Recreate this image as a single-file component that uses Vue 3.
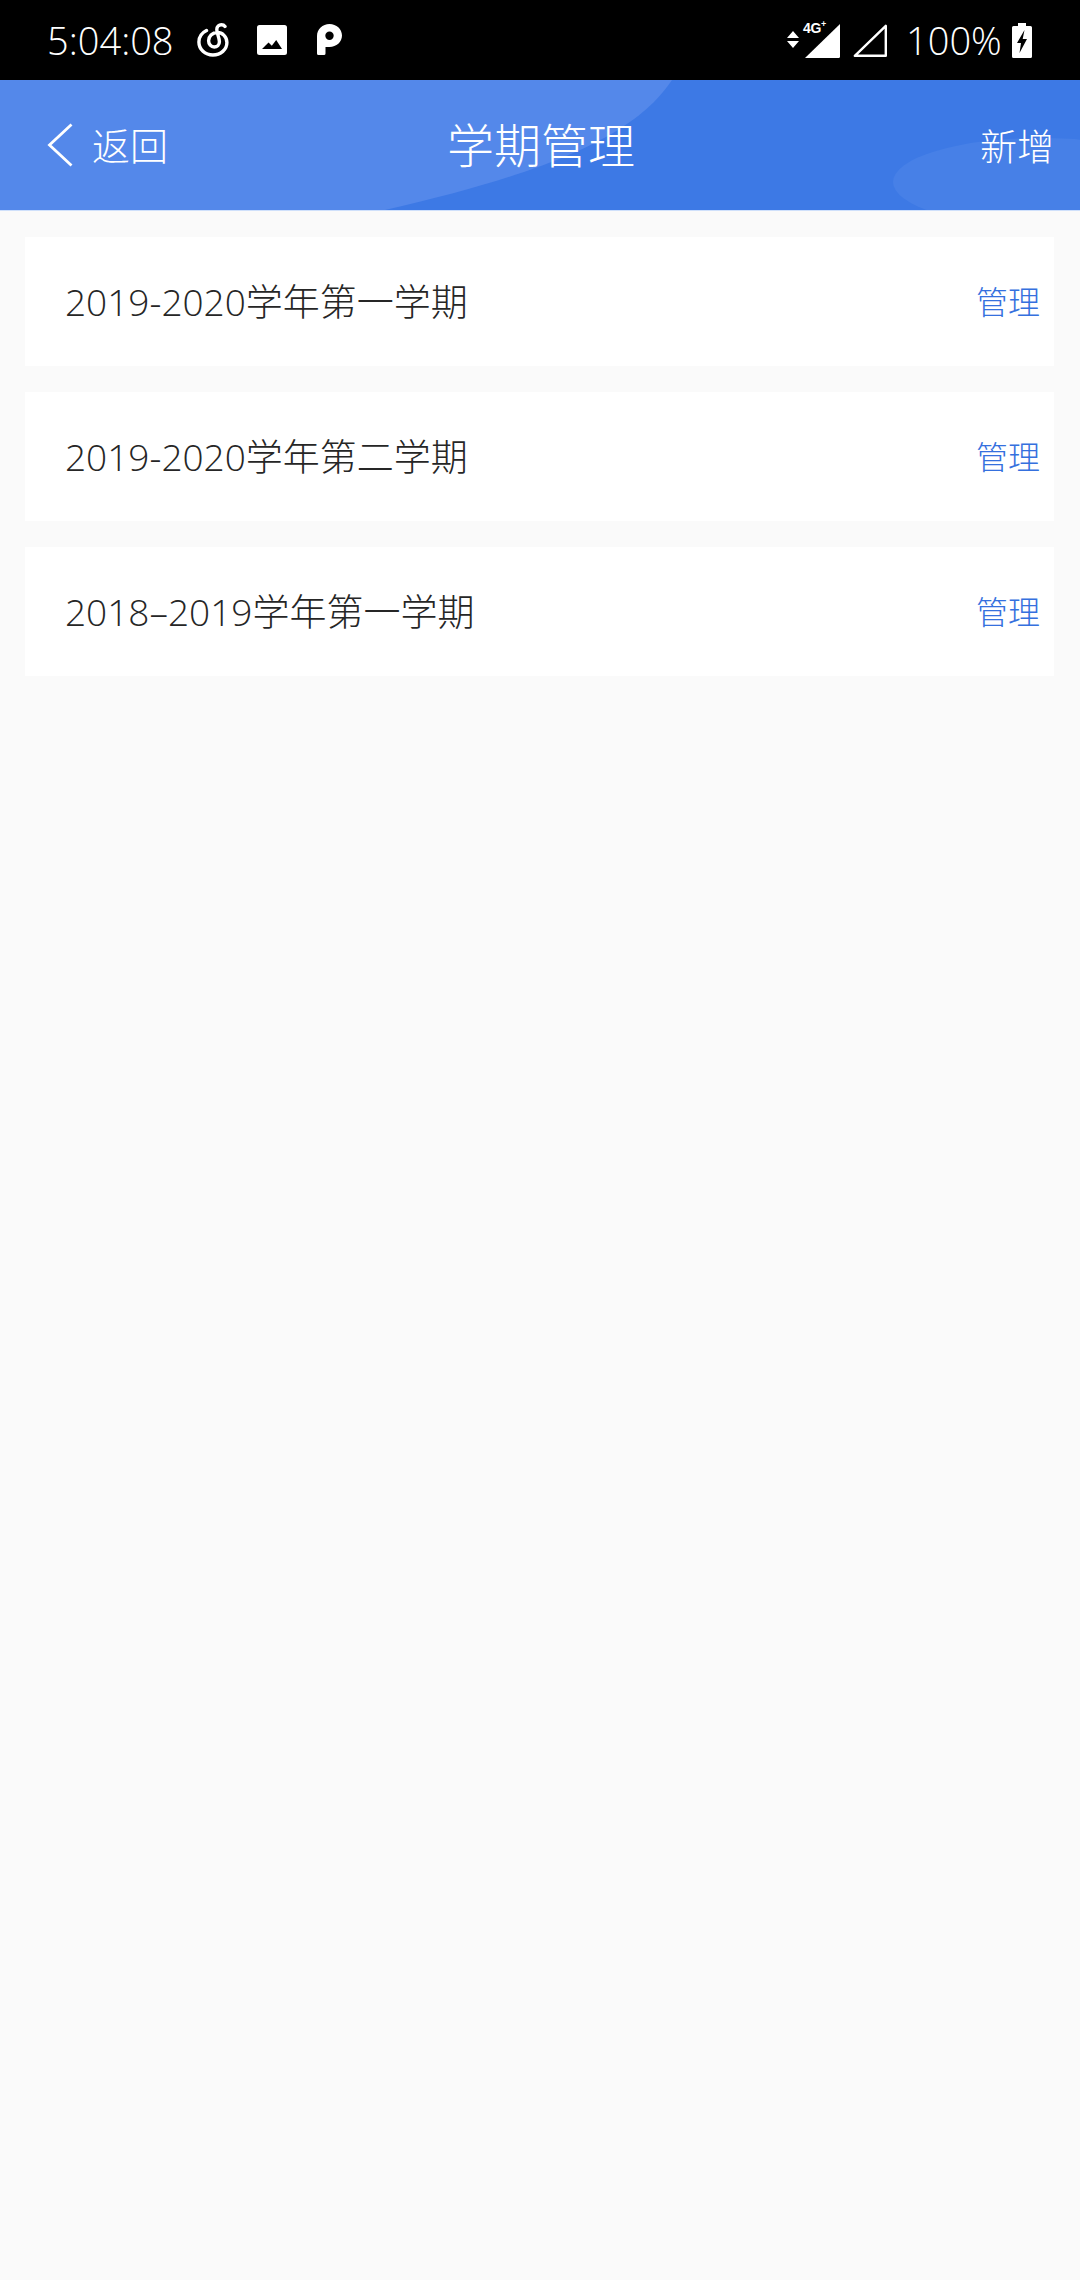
<script setup>
const semestres = [
  { id: 1, nombre: '2019-2020学年第一学期' },
  { id: 2, nombre: '2019-2020学年第二学期' },
  { id: 3, nombre: '2018–2019学年第一学期' }
]
</script>

<template>
  <div class="screen">
    <!-- Barra de estado -->
    <div class="status-bar">
      <div class="status-left">
        <span class="time">5:04:08</span>
        <svg class="ic-netease" viewBox="0 0 32 34" fill="none" stroke="#fff" stroke-width="3.4" stroke-linecap="round">
          <path d="M9.5 7.5C4.5 10 1.9 14.5 1.9 19c0 7.5 6.2 13 14 13s14-5.500 14-12.500c0-5.800-4.500-10-9.500-10-5.200 0-8.800 3.800-8.800 8.200 0 3.500 2.500 6.300 5.600 6.300 3 0 5.200-2.300 5.200-5.200 0-4.500-2.600-8-2.600-12.300 0-3 2.200-4.800 4.600-4.800 1.500 0 2.800.6 3.600 1.700" />
        </svg>
        <svg class="ic-image" viewBox="0 0 30 30">
          <path fill="#fff" fill-rule="evenodd" d="M2.500 0h25A2.500 2.500 0 0 1 30 2.500v25a2.500 2.500 0 0 1-2.500 2.500h-25A2.500 2.500 0 0 1 0 27.500v-25A2.500 2.500 0 0 1 2.500 0zM5 24h20l-5.800-9-4.400 5.800-3.300-3.300z" />
        </svg>
        <svg class="ic-p" viewBox="0 0 25 31">
          <path fill="#fff" fill-rule="evenodd" d="M12.500 0C19.400 0 25 5 25 11.500S19.400 23 12.500 23H8.500v6.500a1.500 1.500 0 0 1-1.500 1.500H1.500A1.500 1.500 0 0 1 0 29.500V12C0 5 5.600 0 12.500 0zm0 7.500a4.200 4.200 0 1 0 0 8.400 4.200 4.200 0 0 0 0-8.400z" />
        </svg>
      </div>
      <div class="status-right">
        <svg class="ic-arrows" viewBox="0 0 12 17">
          <path fill="#fff" d="M6 0l6 7H0zM0 10h12l-6 7z" />
        </svg>
        <div class="signal">
          <svg class="ic-signal" viewBox="0 0 35 34">
            <path fill="#fff" d="M35 0v32.500a1.500 1.500 0 0 1-1.500 1.500H0z" />
          </svg>
          <span class="net">4G<sup>+</sup></span>
        </div>
        <svg class="ic-signal2" viewBox="0 0 35 34">
          <path fill="none" stroke="#fff" stroke-width="2.400" stroke-linejoin="round" d="M33.800 2.800V32.800H2.800z" />
        </svg>
        <span class="battery-text">100%</span>
        <svg class="ic-battery" viewBox="0 0 20 35">
          <path fill="#fff" fill-rule="evenodd" d="M6 0h8v3h4.500A1.500 1.500 0 0 1 20 4.500v29a1.500 1.500 0 0 1-1.500 1.500h-17A1.500 1.500 0 0 1 0 33.500v-29A1.500 1.500 0 0 1 1.500 3H6zM12.500 7L5 20h4l-1.500 10L15 16h-4.300z" />
        </svg>
      </div>
    </div>

    <!-- Cabecera -->
    <header class="header">
      <svg class="header-bg" viewBox="0 0 1080 130" preserveAspectRatio="none">
        <path fill="#5488ea" d="M0 0H672C640 48 570 88 385 130H0z" />
        <ellipse cx="1040" cy="102" rx="147" ry="44" fill="#4780e7" />
      </svg>
      <div class="back">
        <svg class="ic-back" viewBox="0 0 26 44" fill="none" stroke="#fff" stroke-width="2.800">
          <path d="M24.500 1.500L2.500 22l22 20.500" />
        </svg>
        <span class="back-text">返回</span>
      </div>
      <h1 class="title">学期管理</h1>
      <span class="add">新增</span>
    </header>

    <!-- Lista de semestres -->
    <main class="list">
      <div v-for="s in semestres" :key="s.id" class="card">
        <span class="name">{{ s.nombre }}</span>
        <span class="manage">管理</span>
      </div>
    </main>
  </div>
</template>

<style scoped>
.screen {
  width: 1080px;
  height: 2280px;
  background: #fafafa;
  display: flex;
  flex-direction: column;
  overflow: hidden;
  font-family: "Open Sans", "Noto Sans CJK SC", sans-serif;
}

/* Barra de estado */
.status-bar {
  height: 80px;
  background: #000;
  color: #fff;
  display: flex;
  align-items: center;
  justify-content: space-between;
  padding: 0 48px 0 47px;
  box-sizing: border-box;
}

.status-left,
.status-right {
  display: flex;
  align-items: center;
}

.time {
  font-family: "Open Sans", sans-serif;
  font-weight: 300;
  font-size: 38px;
  line-height: 78px;
  width: 150px;
}

.ic-netease { width: 32px; height: 34px; }
.ic-image { width: 30px; height: 30px; margin-left: 28px; margin-top: -1px; }
.ic-p { width: 25px; height: 31px; margin-left: 30px; margin-top: -1px; }

.ic-arrows { width: 12px; height: 17px; margin-right: 6px; margin-top: -1px; }

.signal {
  position: relative;
  width: 35px;
  height: 34px;
  margin-top: 2px;
}

.ic-signal { display: block; width: 35px; height: 34px; }

.net {
  position: absolute;
  left: -2px;
  top: -3px;
  font-family: "Liberation Sans", sans-serif;
  font-weight: 700;
  font-size: 14px;
  line-height: 15px;
  letter-spacing: -0.3px;
  white-space: nowrap;
  background: #000;
  padding-right: 1px;
}

.net sup {
  font-size: 9px;
  line-height: 0;
}

.ic-signal2 { width: 35px; height: 34px; margin-left: 12px; }

.battery-text {
  font-family: "Open Sans", sans-serif;
  font-weight: 300;
  font-size: 38px;
  line-height: 78px;
  margin-left: 19px;
  width: 106px;
}

.ic-battery { width: 20px; height: 35px; }

/* Cabecera */
.header {
  position: relative;
  height: 131px;
  box-sizing: border-box;
  border-bottom: 1px solid #cfe0fb;
  background: #3d79e5;
  color: #fff;
  display: grid;
  grid-template-columns: 1fr auto 1fr;
  align-items: center;
  padding: 0 26px 0 28px;
}

.header-bg {
  position: absolute;
  left: 0;
  top: 0;
  width: 1080px;
  height: 130px;
}

.back {
  position: relative;
  display: flex;
  align-items: center;
  margin-left: 19px;
  font-size: 38px;
  font-weight: 300;
}

.back-text {
  margin-top: -3px;
}

.ic-back {
  width: 26px;
  height: 44px;
  margin-right: 19px;
}

.title {
  position: relative;
  margin: 0;
  font-size: 47px;
  font-weight: 300;
  line-height: 1.2;
}

.add {
  position: relative;
  justify-self: end;
  font-size: 37px;
  font-weight: 300;
}

/* Lista */
.list {
  display: flex;
  flex-direction: column;
  gap: 26px;
  padding: 26px 26px 0 25px;
}

.card {
  height: 129px;
  box-sizing: border-box;
  background: #fff;
  display: flex;
  align-items: center;
  justify-content: space-between;
  padding: 0 14px 3px 40px;
}

.name {
  font-size: 37px;
  font-weight: 300;
  color: #262626;
}

.manage {
  font-size: 32px;
  font-weight: 300;
  color: #3570de;
}
</style>
